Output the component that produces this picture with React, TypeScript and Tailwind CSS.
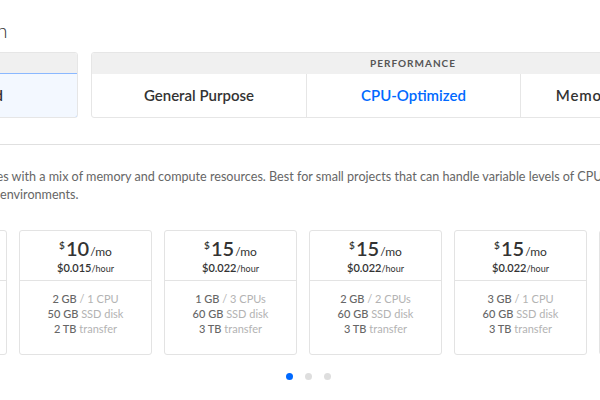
import React from 'react'

const plans = [
  { price: '5', hour: '0.007', ram: '1 GB', cpu: '1 CPU', disk: '25 GB', transfer: '1 TB' },
  { price: '10', hour: '0.015', ram: '2 GB', cpu: '1 CPU', disk: '50 GB', transfer: '2 TB' },
  { price: '15', hour: '0.022', ram: '1 GB', cpu: '3 CPUs', disk: '60 GB', transfer: '3 TB' },
  { price: '15', hour: '0.022', ram: '2 GB', cpu: '2 CPUs', disk: '60 GB', transfer: '3 TB' },
  { price: '15', hour: '0.022', ram: '3 GB', cpu: '1 CPU', disk: '60 GB', transfer: '3 TB' },
  { price: '20', hour: '0.030', ram: '4 GB', cpu: '2 CPUs', disk: '80 GB', transfer: '4 TB' },
]

function PlanCard({ plan }: { plan: (typeof plans)[number] }) {
  return (
    <div className="w-[133px] shrink-0 rounded-[3px] border border-[#e3e3e3] bg-white">
      <div className="flex h-[50px] flex-col items-center justify-center border-b border-[#e3e3e3] pt-[2px]">
        <div className="flex items-baseline text-[#333]">
          <span className="relative -top-[7px] text-[10px] font-semibold">$</span>
          <span className="ml-[1px] text-[20px] font-semibold leading-[20px]">{plan.price}</span>
          <span className="ml-[1px] text-[12px]">/mo</span>
        </div>
        <div className="text-[11px] font-semibold leading-[13px] text-[#333]">
          ${plan.hour}
          <span className="text-[9px] font-normal">/hour</span>
        </div>
      </div>
      <div className="flex h-[73px] flex-col items-center pt-[10px] text-[11px] leading-[15px]">
        <div>
          <span className="font-medium text-[#666]">{plan.ram}</span>
          <span className="text-[#b3b3b3]"> / {plan.cpu}</span>
        </div>
        <div>
          <span className="font-medium text-[#666]">{plan.disk}</span>
          <span className="text-[#b3b3b3]"> SSD disk</span>
        </div>
        <div>
          <span className="font-medium text-[#666]">{plan.transfer}</span>
          <span className="text-[#b3b3b3]"> transfer</span>
        </div>
      </div>
    </div>
  )
}

export default function App() {
  return (
    <div
      className="relative h-[400px] w-[600px] overflow-hidden bg-white"
      style={{ fontFamily: 'Lato, "Liberation Sans", sans-serif' }}
    >
      <h2 className="ml-[-115px] mt-[18px] whitespace-nowrap text-[20px] font-light leading-[24px] text-[#333]">
        Choose a plan
      </h2>

      <div className="ml-[-131px] mt-[10px] flex gap-[13px]">
        <div className="w-[209px] shrink-0 overflow-hidden rounded-[3px] border border-[#e6e6e6]">
          <div className="flex h-[21px] items-center justify-center bg-[#f0f0f0] text-[10px] font-bold tracking-[1px] text-[#555]">
            STARTER
          </div>
          <div className="-m-[1px] flex h-[45px] items-center justify-center rounded-b-[3px] border border-[#8ab8ff] bg-[#f3f8ff] text-[15px] font-semibold text-[#333]">
            Standard
          </div>
        </div>
        <div className="w-[644px] shrink-0 overflow-hidden rounded-[3px] border border-[#e6e6e6]">
          <div className="flex h-[21px] items-center justify-center bg-[#f0f0f0] text-[10px] font-bold tracking-[1px] text-[#555]">
            PERFORMANCE
          </div>
          <div className="grid h-[43px] grid-cols-3 text-[15px] font-semibold">
            <div className="flex items-center justify-center text-[#333]">General Purpose</div>
            <div className="flex items-center justify-center border-l border-[#e6e6e6] text-[#0069ff]">CPU-Optimized</div>
            <div className="flex items-center justify-center border-l border-[#e6e6e6] text-[#333] tracking-[0.8px]">Memory-Optimized</div>
          </div>
        </div>
      </div>

      <div className="mt-[26px] border-t border-[#e0e0e0]" />

      <p className="mt-[23px] whitespace-nowrap text-[12.6px] leading-[18px] text-[#666] -indent-[113px]">
        Basic virtual machines with a mix of memory and compute resources. Best for small projects that can handle variable levels of CPU
        <br />
        environments.
      </p>

      <div className="ml-[-126px] mt-[26px] flex gap-[12px]">
        {plans.map((p, i) => (
          <PlanCard key={i} plan={p} />
        ))}
      </div>

      <div className="ml-[286px] mt-[18px] flex gap-[12px]">
        <span className="h-[7px] w-[7px] rounded-full bg-[#0069ff]" />
        <span className="h-[7px] w-[7px] rounded-full bg-[#dedede]" />
        <span className="h-[7px] w-[7px] rounded-full bg-[#dedede]" />
      </div>
    </div>
  )
}
